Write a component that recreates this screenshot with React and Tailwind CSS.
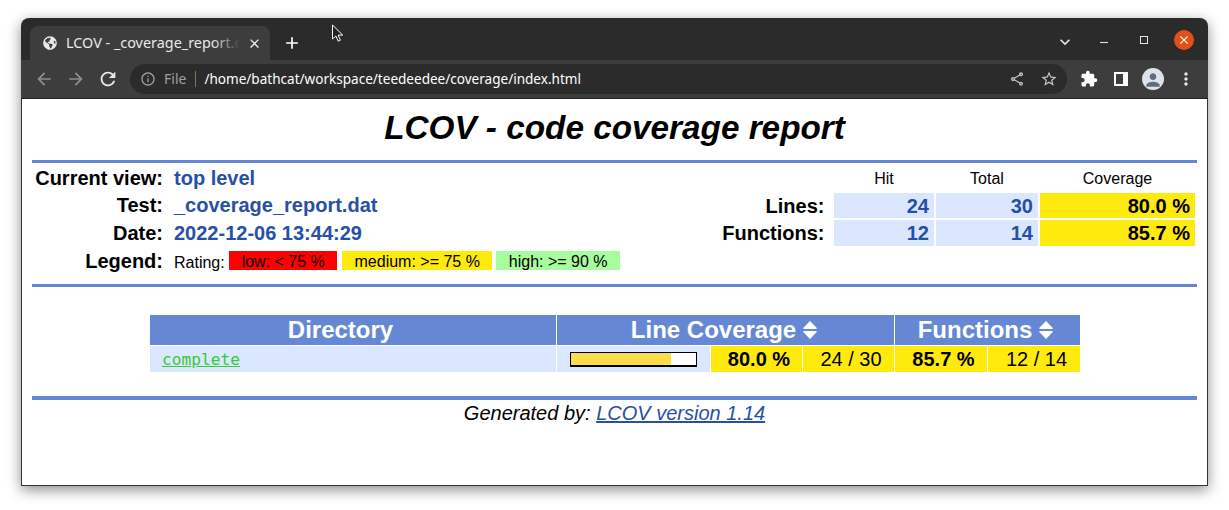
import React from "react";
import { FaGlobeAmericas } from "react-icons/fa";
import {
  MdAdd,
  MdArrowBack,
  MdArrowForward,
  MdClose,
  MdExtension,
  MdInfoOutline,
  MdKeyboardArrowDown,
  MdMoreVert,
  MdOutlineShare,
  MdPerson,
  MdRefresh,
  MdStarBorder,
} from "react-icons/md";

const sans = "font-['Liberation_Sans',Arial,sans-serif]";
const ui = "font-['Noto_Sans',sans-serif]";

// Tab strip with the window controls
const TitleBar = () => (
  <div className="flex h-[42px] items-end bg-[#2b2b2b] pl-[9px] text-white">
    <div className="flex h-[34px] w-[240px] items-center rounded-t-lg bg-[#3d3d3d] pl-[13px]">
      <FaGlobeAmericas className="h-[14px] w-[14px] shrink-0 text-[#e8eaed]" />
      <div className="relative ml-[9px] w-[174px] -translate-y-px overflow-hidden whitespace-nowrap">
        <span className={`${ui} text-[14.4px] text-[#e8eaed]`}>LCOV - _coverage_report.dat</span>
        <div className="absolute inset-y-0 right-0 w-7 bg-gradient-to-r from-transparent to-[#3d3d3d]" />
      </div>
      <MdClose className="ml-[7px] h-[15px] w-[15px] text-[#f1f3f4]" />
    </div>
    <div className="flex h-[34px] w-[44px] items-center justify-center">
      <MdAdd className="h-[20px] w-[20px]" />
    </div>
    <div className="flex h-full flex-1 items-center justify-end pt-[2px]">
      <MdKeyboardArrowDown className="mr-[25px] h-[20px] w-[20px] translate-y-[2px] text-[#e8eaed]" />
      <div className="mr-[32px] h-px w-[8px] translate-y-[2px] bg-[#e8eaed]" />
      <div className="mr-[26px] h-[8px] w-[8px] border border-[#e8eaed]" />
      <div className="mr-[14px] flex h-[20px] w-[20px] items-center justify-center rounded-full bg-[#e2501a]">
        <MdClose className="h-[14px] w-[14px]" />
      </div>
    </div>
  </div>
);

// Back/forward, address box, extensions
const Toolbar = () => (
  <div className="flex h-[39px] items-center border-b border-[#222] bg-[#3d3d3d] pl-[13px] text-[#e8eaed]">
    <MdArrowBack className="h-[20px] w-[20px] text-[#8d8e90]" />
    <MdArrowForward className="ml-[12px] h-[20px] w-[20px] text-[#8d8e90]" />
    <MdRefresh className="ml-[11px] h-[22px] w-[22px]" />
    <div className="ml-[11px] flex h-[30px] w-[937px] items-center rounded-full bg-[#2b2b2b] pl-[10px]">
      <MdInfoOutline className="h-[16px] w-[16px] text-[#9aa0a6]" />
      <span className={`${ui} ml-[8px] -translate-y-px text-[14px] text-[#9aa0a6]`}>File</span>
      <div className="ml-[9px] h-[16px] w-px bg-[#777]" />
      <span className={`${ui} ml-[8px] text-[13.55px] text-white`}>
        /home/bathcat/workspace/teedeedee/coverage/index.html
      </span>
      <MdOutlineShare className="ml-auto h-[16px] w-[16px] -translate-x-px text-[#c4c6c8]" />
      <MdStarBorder className="ml-[14px] mr-[9px] h-[18px] w-[18px] text-[#c4c6c8]" />
    </div>
    <MdExtension className="ml-[13px] h-[18px] w-[18px] text-white" />
    <div className="ml-[16px] flex h-[14px] w-[14px] bg-white p-[2px] pr-[5px]">
      <div className="h-full w-full bg-[#3d3d3d]" />
    </div>
    <div className="ml-[14px] flex h-[22px] w-[22px] items-end justify-center overflow-hidden rounded-full bg-[#dfe3e9]">
      <MdPerson className="h-[20px] w-[20px] text-[#5f6b85]" />
    </div>
    <MdMoreVert className="ml-[12px] h-[20px] w-[20px]" />
  </div>
);

const InfoRow = ({ label, children, height = "h-[28px]" }) => (
  <div className={`flex items-center ${height}`}>
    <div className="w-[131px] text-right text-[20px] font-bold text-black">{label}</div>
    <div className="ml-[11px] text-[20px] font-bold text-[#284fa8]">{children}</div>
  </div>
);

const LegendChip = ({ bg, width, children }) => (
  <span className={`flex h-[19px] items-center justify-center pl-px pt-[3px] text-[16px] text-black ${bg} ${width}`}>
    {children}
  </span>
);

const SummaryRow = ({ label, hit, total, pct, height }) => (
  <div className={`flex items-stretch gap-[2px] ${height}`}>
    <div className="mr-[7.5px] flex w-[120.5px] items-center justify-end text-[20px] font-bold">{label}</div>
    <div className="flex w-[100px] items-center justify-end bg-[#dae7fe] pr-[5px] text-[20px] font-bold text-[#284fa8]">{hit}</div>
    <div className="flex w-[102px] items-center justify-end bg-[#dae7fe] pr-[5px] text-[20px] font-bold text-[#284fa8]">{total}</div>
    <div className="flex w-[155px] items-center justify-end bg-[#ffea0d] pr-[5px] text-[20px] font-bold">{pct}</div>
  </div>
);

const SortIcon = () => (
  <svg width="14" height="18" viewBox="0 0 14 18" fill="#fff" stroke="#fff" strokeWidth="1.5" strokeLinejoin="round">
    <path d="M7 1 L13 7.2 H1 Z" />
    <path d="M1 10.8 H13 L7 17 Z" />
  </svg>
);

const HeadCell = ({ width, children }) => (
  <div className={`flex h-[30px] items-center justify-center gap-[7px] bg-[#6688d4] text-[24px] font-bold text-white ${width}`}>
    {children}
  </div>
);

const CovCell = ({ width, bold, children }) => (
  <div className={`flex h-[26px] items-center justify-center bg-[#ffea0d] pl-[5px] text-[20px] text-black ${width} ${bold ? "font-bold" : ""}`}>
    {children}
  </div>
);

const Report = () => (
  <div className={`flex-1 border-x border-b border-[#333] bg-white px-[10px] ${sans} text-black`}>
    <h1 className="flex h-[61px] items-center justify-center pb-[3px] text-[33.3px] font-bold italic">
      LCOV - code coverage report
    </h1>
    <div className="h-[3px] bg-[#6688d4]" />

    <div className="flex h-[121px] justify-between">
      <div className="pt-[1px]">
        <InfoRow label="Current view:" height="h-[27px]">top level</InfoRow>
        <InfoRow label="Test:">_coverage_report.dat</InfoRow>
        <InfoRow label="Date:">2022-12-06 13:44:29</InfoRow>
        <div className="flex h-[28px] items-center">
          <div className="w-[131px] text-right text-[20px] font-bold">Legend:</div>
          <div className="ml-[11px] flex -translate-y-px items-center text-[16px]">
            <span className="mr-[4px] translate-y-[3px]">Rating:</span>
            <LegendChip bg="bg-[#ff0000]" width="w-[108px]">low: &lt; 75 %</LegendChip>
            <LegendChip bg="ml-[5px] bg-[#ffea0d]" width="w-[150px]">medium: &gt;= 75 %</LegendChip>
            <LegendChip bg="ml-[4px] bg-[#a7fc9d]" width="w-[124px]">high: &gt;= 90 %</LegendChip>
          </div>
        </div>
      </div>
      <div className="mr-[2px]">
        <div className="flex h-[30px] items-center gap-[2px] pt-[2px] text-[16px]">
          <div className="w-[128px]" />
          <div className="w-[100px] text-center">Hit</div>
          <div className="w-[102px] text-center">Total</div>
          <div className="w-[155px] text-center">Coverage</div>
        </div>
        <SummaryRow label="Lines:" hit="24" total="30" pct="80.0 %" height="h-[25px]" />
        <div className="h-[2px]" />
        <SummaryRow label="Functions:" hit="12" total="14" pct="85.7 %" height="h-[26px]" />
      </div>
    </div>
    <div className="h-[3px] bg-[#6688d4]" />

    {/* directory table */}
    <div className="ml-[118px] mt-[28px] flex w-[930px] flex-col gap-px">
      <div className="flex gap-px">
        <HeadCell width="w-[406px] pr-[25px]">Directory</HeadCell>
        <HeadCell width="w-[337px] pr-[3px]">
          Line Coverage <SortIcon />
        </HeadCell>
        <HeadCell width="w-[185px] pr-[4px]">
          Functions <SortIcon />
        </HeadCell>
      </div>
      <div className="flex gap-px">
        <div className="flex h-[26px] w-[406px] items-center bg-[#dae7fe] pl-[12px] pt-[3px]">
          <a href="#" className="font-['DejaVu_Sans_Mono',monospace] text-[16.2px] text-[#33cc33] underline">complete</a>
        </div>
        <div className="flex h-[26px] w-[153px] items-center bg-[#dae7fe] pl-[13px]">
          <div className="flex h-[15px] w-[127px] border border-b-2 border-black bg-white">
            <div className="h-full w-[100px] bg-[#ffdd4a]" />
          </div>
        </div>
        <CovCell width="w-[91px]" bold>80.0 %</CovCell>
        <CovCell width="w-[91px]">24 / 30</CovCell>
        <CovCell width="w-[92px]" bold>85.7 %</CovCell>
        <CovCell width="w-[92px]">12 / 14</CovCell>
      </div>
    </div>

    <div className="mt-[24px] h-[4px] bg-[#6688d4]" />
    <div className="mt-px text-center text-[20px] italic leading-[24px]">
      Generated by:{" "}
      <a href="#" className="text-[#284fa8] underline">LCOV version 1.14</a>
    </div>
  </div>
);

const App = () => (
  <div className="relative h-[510px] w-[1229px] overflow-hidden bg-white pl-[21px] pt-[18px]">
    <div className="flex h-[468px] w-[1187px] flex-col overflow-hidden rounded-t-lg shadow-[0_4px_14px_rgba(0,0,0,0.45)]">
      <TitleBar />
      <Toolbar />
      <Report />
    </div>
    {/* mouse pointer */}
    <svg className="absolute left-[331px] top-[24px]" width="14" height="20" viewBox="0 0 14 20">
      <path d="M1.5 1v14l3.4-3 2.3 5.2 2.2-1-2.3-5.1h4.6z" fill="#222" stroke="#fff" strokeWidth="1" />
    </svg>
  </div>
);

export default App;
